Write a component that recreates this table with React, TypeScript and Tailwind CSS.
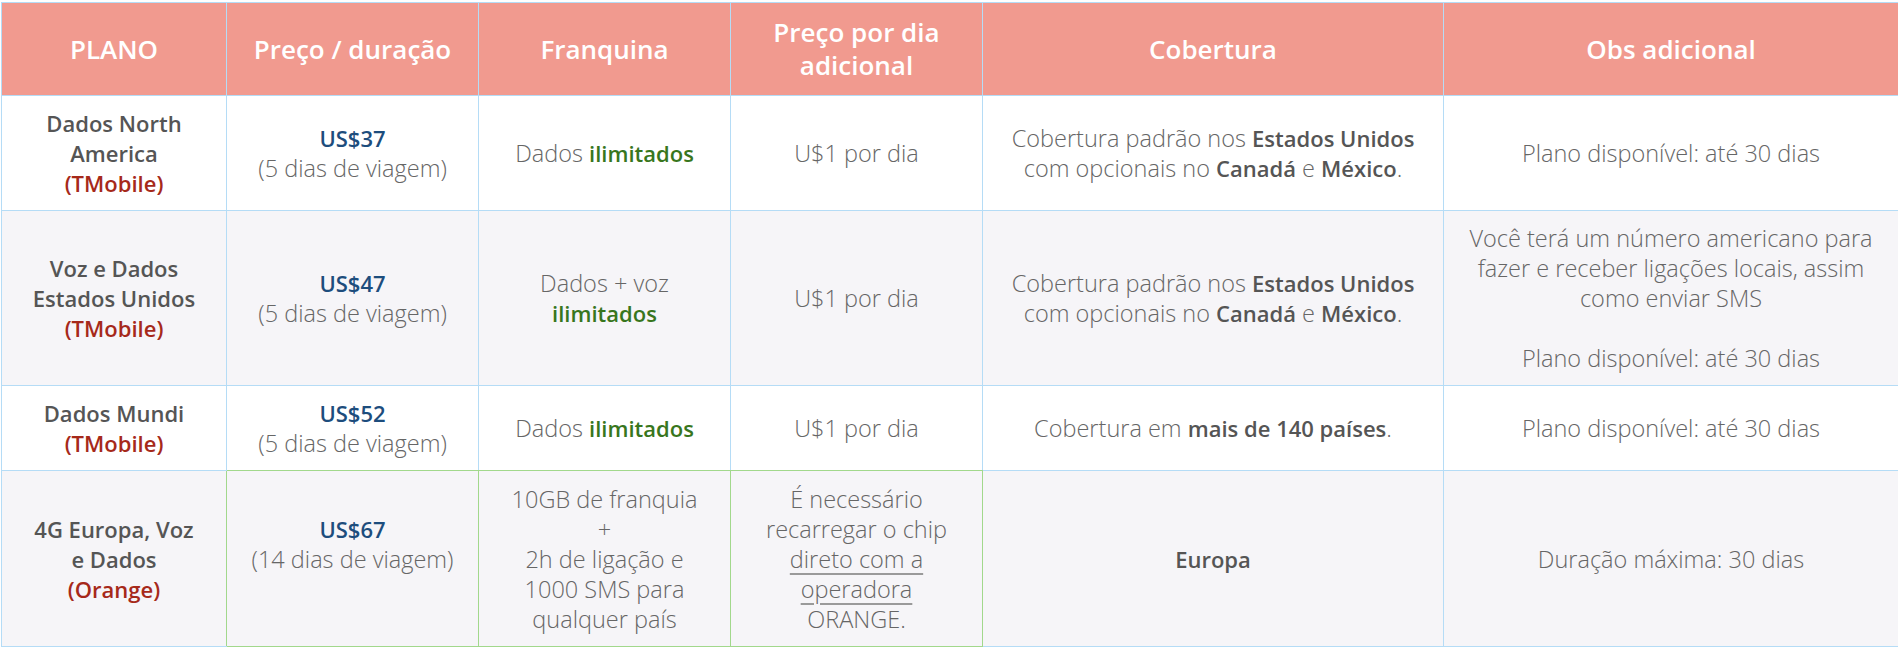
import React from 'react';

type Cell = React.ReactNode;

const B = ({ children }: { children: React.ReactNode }) => (
  <span className="text-[22px] font-semibold text-[#555]">{children}</span>
);
const Green = ({ children }: { children: React.ReactNode }) => (
  <span className="text-[22px] font-semibold text-[#38761d]">{children}</span>
);
const Red = ({ children }: { children: React.ReactNode }) => (
  <span className="text-[22px] font-semibold text-[#a6291a]">{children}</span>
);
const Price = ({ value, days }: { value: string; days: string }) => (
  <>
    <span className="text-[22px] font-semibold text-[#1d4d7d]">{value}</span>
    <br />({days} dias de viagem)
  </>
);

const headers: Cell[] = [
  'PLANO',
  'Preço / duração',
  'Franquina',
  <>Preço por dia<br />adicional</>,
  'Cobertura',
  'Obs adicional',
];

const coberturaUS = (
  <>
    Cobertura padrão nos <B>Estados Unidos</B>
    <br />com opcionais no <B>Canadá</B> e <B>México</B>.
  </>
);

const rows: { h: string; alt: boolean; cells: Cell[] }[] = [
  {
    h: 'h-[115px]',
    alt: false,
    cells: [
      <><B>Dados North<br />America</B><br /><Red>(TMobile)</Red></>,
      <Price value="US$37" days="5" />,
      <>Dados <Green>ilimitados</Green></>,
      'U$1 por dia',
      coberturaUS,
      'Plano disponível: até 30 dias',
    ],
  },
  {
    h: 'h-[175px]',
    alt: true,
    cells: [
      <><B>Voz e Dados<br />Estados Unidos</B><br /><Red>(TMobile)</Red></>,
      <Price value="US$47" days="5" />,
      <>Dados + voz<br /><Green>ilimitados</Green></>,
      'U$1 por dia',
      coberturaUS,
      <>
        Você terá um número americano para
        <br />fazer e receber ligações locais, assim
        <br />como enviar SMS
        <br />
        <br />Plano disponível: até 30 dias
      </>,
    ],
  },
  {
    h: 'h-[85px]',
    alt: false,
    cells: [
      <><B>Dados Mundi</B><br /><Red>(TMobile)</Red></>,
      <Price value="US$52" days="5" />,
      <>Dados <Green>ilimitados</Green></>,
      'U$1 por dia',
      <>Cobertura em <B>mais de 140 países</B>.</>,
      'Plano disponível: até 30 dias',
    ],
  },
];

const blue = 'border-[#b5dcf6]';
const green = 'border-[#a2d88c]';

export default function App() {
  return (
    <div className="min-h-[648px] bg-white pt-[2px] pl-[1px] font-['Open_Sans','Noto_Sans',sans-serif]">
      <table className="w-[1897px] table-fixed border-collapse text-center">
        <colgroup>
          <col className="w-[225px]" />
          <col className="w-[252px]" />
          <col className="w-[252px]" />
          <col className="w-[252px]" />
          <col className="w-[461px]" />
          <col className="w-[455px]" />
        </colgroup>
        <thead>
          <tr className="h-[93px] bg-[#f19a8f]">
            {headers.map((h, i) => (
              <th
                key={i}
                className={`border ${blue} px-1 align-middle text-[26px] font-semibold leading-[33px] text-white`}
              >
                {h}
              </th>
            ))}
          </tr>
        </thead>
        <tbody className="text-[23.5px] leading-[30px] font-light text-[#666]">
          {rows.map((r, ri) => (
            <tr key={ri} className={`${r.h} ${r.alt ? 'bg-[#f6f5f8]' : 'bg-white'}`}>
              {r.cells.map((c, ci) => (
                <td
                  key={ci}
                  className={`border px-1 align-middle ${
                    ri === 2 && ci >= 1 && ci <= 3 ? `${blue} border-b-[#a2d88c]` : blue
                  }`}
                >
                  {c}
                </td>
              ))}
            </tr>
          ))}
          <tr className="h-[176px] bg-[#f6f5f8]">
            <td className={`border ${blue} border-r-[#a2d88c] px-1 align-middle`}>
              <B>4G Europa, Voz<br />e Dados</B>
              <br />
              <Red>(Orange)</Red>
            </td>
            <td className={`border ${green} px-1 align-middle`}>
              <Price value="US$67" days="14" />
              <br />
              {'\u00a0'}
            </td>
            <td className={`border ${green} px-1 align-middle`}>
              10GB de franquia
              <br />+
              <br />2h de ligação e
              <br />1000 SMS para
              <br />qualquer país
            </td>
            <td className={`border ${green} px-1 align-middle`}>
              É necessário
              <br />recarregar o chip
              <br />
              <span className="underline decoration-[#9a9a9a] underline-offset-[5px]">
                direto com a
                <br />operadora
              </span>
              <br />ORANGE.
            </td>
            <td className={`border ${blue} px-1 align-middle`}>
              <B>Europa</B>
            </td>
            <td className={`border ${blue} px-1 align-middle`}>Duração máxima: 30 dias</td>
          </tr>
        </tbody>
      </table>
    </div>
  );
}
